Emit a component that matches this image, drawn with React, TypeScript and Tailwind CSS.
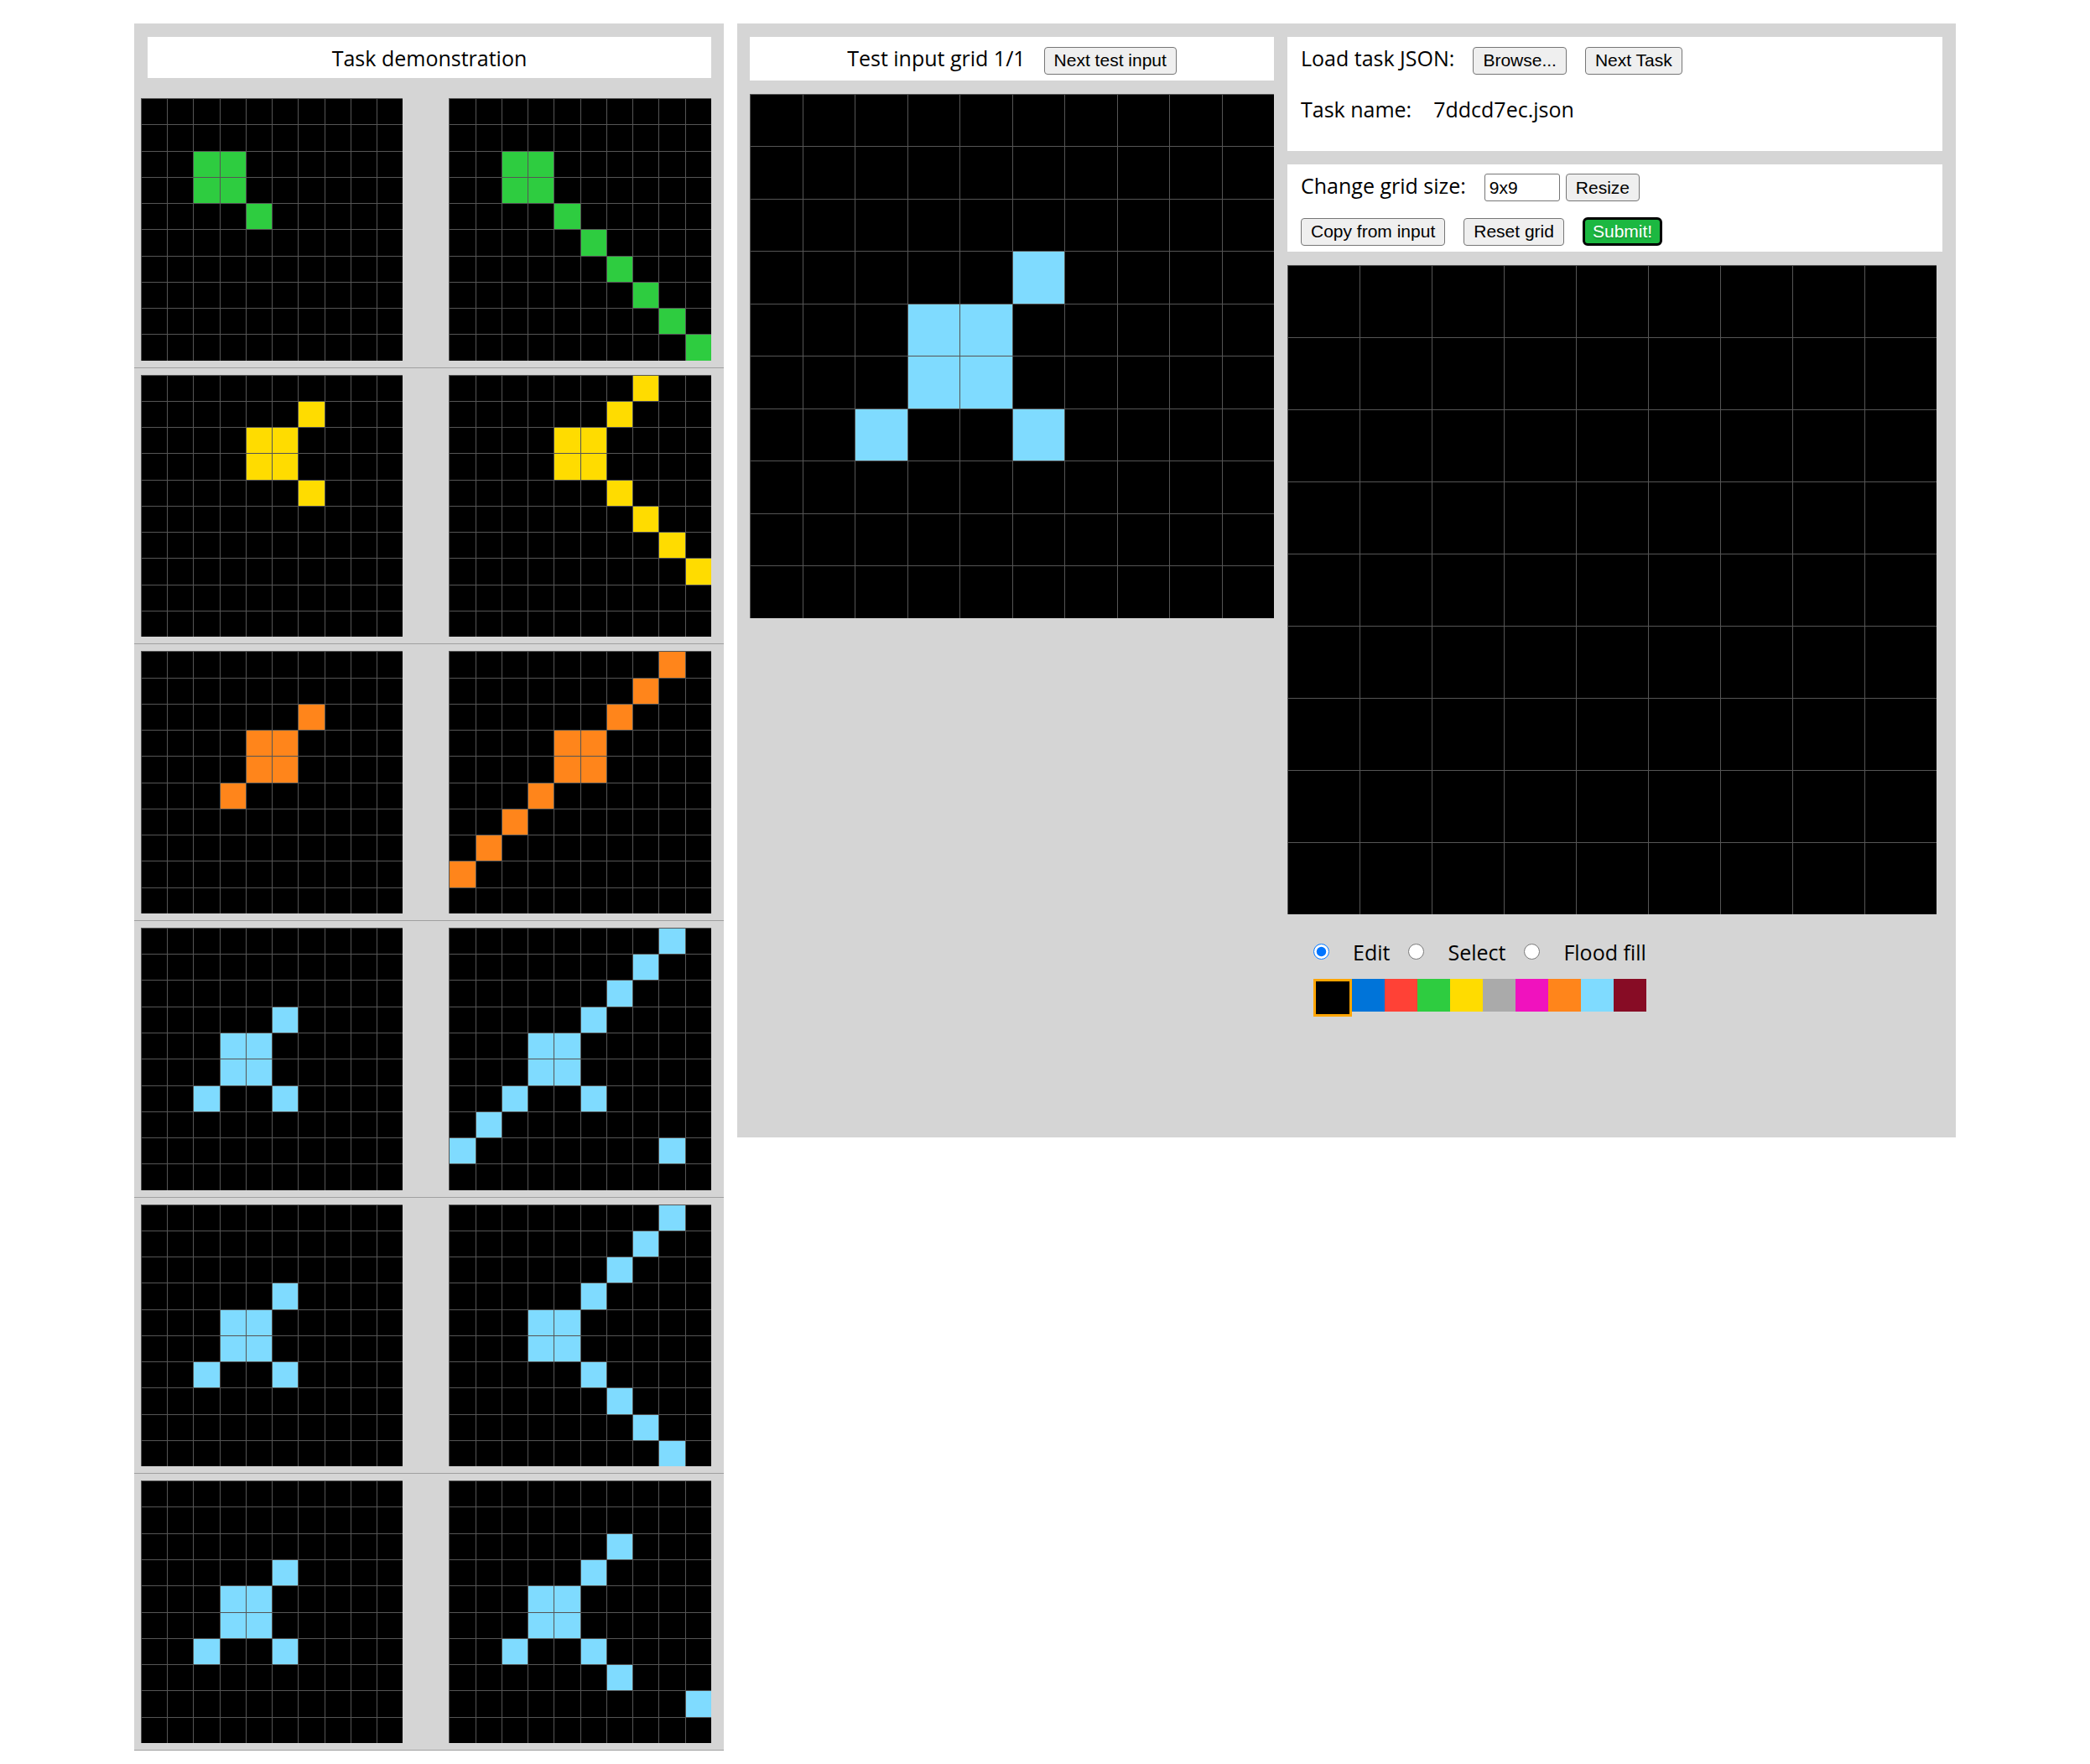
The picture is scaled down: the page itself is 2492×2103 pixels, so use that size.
import { useState } from "react";

const COLORS = [
  "bg-black",
  "bg-[#0074d9]",
  "bg-[#ff4136]",
  "bg-[#2ecc40]",
  "bg-[#ffdc00]",
  "bg-[#aaaaaa]",
  "bg-[#f012be]",
  "bg-[#ff851b]",
  "bg-[#7fdbff]",
  "bg-[#870c25]",
];
const COLOR_NAMES = ["Black", "Blue", "Red", "Green", "Yellow", "Grey", "Pink", "Orange", "Light blue", "Maroon"];

// A cell is written as "row column", one digit each.
type Pair = { color: number; input: string; output: string };

const PAIRS: Pair[] = [
  { color: 3, input: "22 23 32 33 44", output: "22 23 32 33 44 55 66 77 88 99" },
  { color: 4, input: "16 24 25 34 35 46", output: "07 16 24 25 34 35 46 57 68 79" },
  { color: 7, input: "26 34 35 44 45 53", output: "08 17 26 34 35 44 45 53 62 71 80" },
  { color: 8, input: "35 43 44 53 54 62 65", output: "08 17 26 35 43 44 53 54 62 65 71 80 88" },
  { color: 8, input: "35 43 44 53 54 62 65", output: "08 17 26 35 43 44 53 54 65 76 87 98" },
  { color: 8, input: "35 43 44 53 54 62 65", output: "26 35 43 44 53 54 62 65 76 89" },
];

function Board({ size, cells = "", color = 0, label }: { size: 9 | 10; cells?: string; color?: number; label: string }) {
  const filled = new Set(cells.split(" "));
  return (
    <div
      role="img"
      aria-label={label}
      className={
        size === 10
          ? "grid aspect-square w-full grid-cols-10 grid-rows-10"
          : "grid aspect-square w-full grid-cols-9 grid-rows-9"
      }
    >
      {Array.from({ length: size * size }, (_, i) => {
        const key = `${Math.floor(i / size)}${i % size}`;
        return (
          <div key={key} className={`border-t border-l border-[#555555] ${COLORS[filled.has(key) ? color : 0]}`} />
        );
      })}
    </div>
  );
}

function Button({ children }: { children: string }) {
  return (
    <button
      type="button"
      className="h-[33px] rounded-[4px] border border-[#767676] bg-[#efefef] px-[11px] font-['Liberation_Sans',sans-serif] text-[21px] leading-6 whitespace-nowrap"
    >
      {children}
    </button>
  );
}

export default function App() {
  const [size, setSize] = useState("9x9");
  const [mode, setMode] = useState("Edit");
  const [picked, setPicked] = useState(0);

  return (
    <main className="grid grid-cols-[703fr_1453fr] items-start gap-4 bg-white px-40 pt-7 pb-4 font-['Open_Sans',sans-serif] text-[25px] leading-[34px] text-black">
      <section className="bg-[#d5d5d5] pt-4">
        <h1 className="mr-[15px] ml-4 bg-white pt-2 pb-[7px] text-center">Task demonstration</h1>
        <div className="pt-4">
          {PAIRS.map((pair, i) => (
            <div key={i} className="grid grid-cols-2 gap-[55px] border-b border-[#a0a0a0] py-2 pr-[15px] pl-[1.1%]">
              <Board size={10} cells={pair.input} color={pair.color} label={`Example ${i + 1} input`} />
              <Board size={10} cells={pair.output} color={pair.color} label={`Example ${i + 1} output`} />
            </div>
          ))}
        </div>
      </section>

      <section className="grid grid-cols-[625fr_781fr] items-start gap-4 bg-[#d5d5d5] pt-4 pr-4 pb-[144px] pl-[15px]">
        <div className="flex flex-col gap-4">
          <div className="flex items-baseline justify-center gap-[22px] bg-white pt-2 pb-[7px]">
            <span>Test input grid 1/1</span>
            <Button>Next test input</Button>
          </div>
          <Board size={10} cells="35 43 44 53 54 62 65" color={8} label="Test input" />
        </div>

        <div className="flex flex-col gap-4">
          <div className="bg-white px-4 pt-2 pb-[33px]">
            <div className="flex items-baseline gap-[22px]">
              <span>Load task JSON:</span>
              <Button>Browse...</Button>
              <Button>Next Task</Button>
            </div>
            <div className="flex gap-[26px] pt-6">
              <span>Task name:</span>
              <span>7ddcd7ec.json</span>
            </div>
          </div>

          <div className="flex flex-col gap-[19px] bg-white px-4 pt-2 pb-[7px]">
            <div className="flex items-baseline">
              <label htmlFor="grid-size">Change grid size:</label>
              <input
                id="grid-size"
                value={size}
                onChange={(e) => setSize(e.target.value)}
                className="mr-[7px] ml-[22px] h-[33px] w-[90px] rounded-[3px] border border-[#767676] bg-white px-[5px] font-['Liberation_Sans',sans-serif] text-[21px] leading-6"
              />
              <Button>Resize</Button>
            </div>
            <div className="flex items-baseline gap-[22px]">
              <Button>Copy from input</Button>
              <Button>Reset grid</Button>
              <button
                type="button"
                className="h-[34px] rounded-[6px] border-3 border-black bg-[#1cb841] px-[9px] font-['Liberation_Sans',sans-serif] text-[21px] leading-6 text-white [text-shadow:0_2px_2px_rgba(0,0,0,0.2)]"
              >
                Submit!
              </button>
            </div>
          </div>

          <div className="pr-[7px]">
            <Board size={9} label="Output" />
          </div>

          <div className="flex flex-col gap-[15px] pt-3 pl-[31px]">
            <div className="flex gap-[22px]">
              {["Edit", "Select", "Flood fill"].map((name) => (
                <label key={name} className="flex gap-[28px]">
                  <input
                    type="radio"
                    name="mode"
                    checked={mode === name}
                    onChange={() => setMode(name)}
                    className="mt-[7px] size-[19px]"
                  />
                  {name}
                </label>
              ))}
            </div>
            <div className="flex h-[45px] items-start">
              {COLORS.map((c, i) => (
                <button
                  key={c}
                  type="button"
                  aria-label={COLOR_NAMES[i]}
                  aria-pressed={picked === i}
                  onClick={() => setPicked(i)}
                  className={`box-content h-[39px] ${picked === i ? "w-10 border-3 border-[#ffa500]" : "w-[39px]"} ${c}`}
                />
              ))}
            </div>
          </div>
        </div>
      </section>
    </main>
  );
}
